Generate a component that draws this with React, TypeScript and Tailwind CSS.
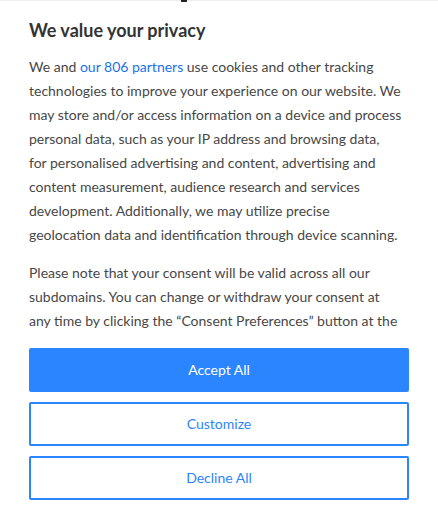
export default function App() {
  return (
    <div className="relative w-[438px] h-[516px] bg-white overflow-hidden" style={{ fontFamily: "Lato, 'Noto Sans', sans-serif" }}>
      <div className="h-px bg-[#efefef] w-full" />
      <div className="absolute top-0 left-[181px] w-[6px] h-[2px] bg-[#222]" />
      <div className="px-[29px]">
        <div className="h-[332px] overflow-hidden pt-[17px]">
          <h2 className="text-[18px] leading-[24px] font-bold text-[#333333]">We value your privacy</h2>
          <p className="mt-[13px] text-[14px] leading-[24px] text-[#474747] whitespace-nowrap">
            We and <span className="text-[#1a73e8]">our 806 partners</span> use cookies and other tracking<br />
            technologies to improve your experience on our website. We<br />
            may store and/or access information on a device and process<br />
            personal data, such as your IP address and browsing data,<br />
            for personalised advertising and content, advertising and<br />
            content measurement, audience research and services<br />
            development. Additionally, we may utilize precise<br />
            geolocation data and identification through device scanning.
          </p>
          <p className="mt-[14px] text-[14px] leading-[24px] text-[#474747] whitespace-nowrap">
            Please note that your consent will be valid across all our<br />
            subdomains. You can change or withdraw your consent at<br />
            any time by clicking the “Consent Preferences” button at the<br />
            bottom of your screen.
          </p>
        </div>
        <div className="flex flex-col gap-[10px] mt-[15px]">
          <button className="h-[44px] w-full rounded-[2px] bg-[#2b85ff] text-white text-[14px] leading-[20px] pb-px">Accept All</button>
          <button className="h-[44px] w-full rounded-[2px] border-2 border-[#2b85ff] text-[#2b85ff] text-[14px] leading-[20px] pb-px">Customize</button>
          <button className="h-[44px] w-full rounded-[2px] border-2 border-[#2b85ff] text-[#2b85ff] text-[14px] leading-[20px] pb-px">Decline All</button>
        </div>
      </div>
    </div>
  );
}
